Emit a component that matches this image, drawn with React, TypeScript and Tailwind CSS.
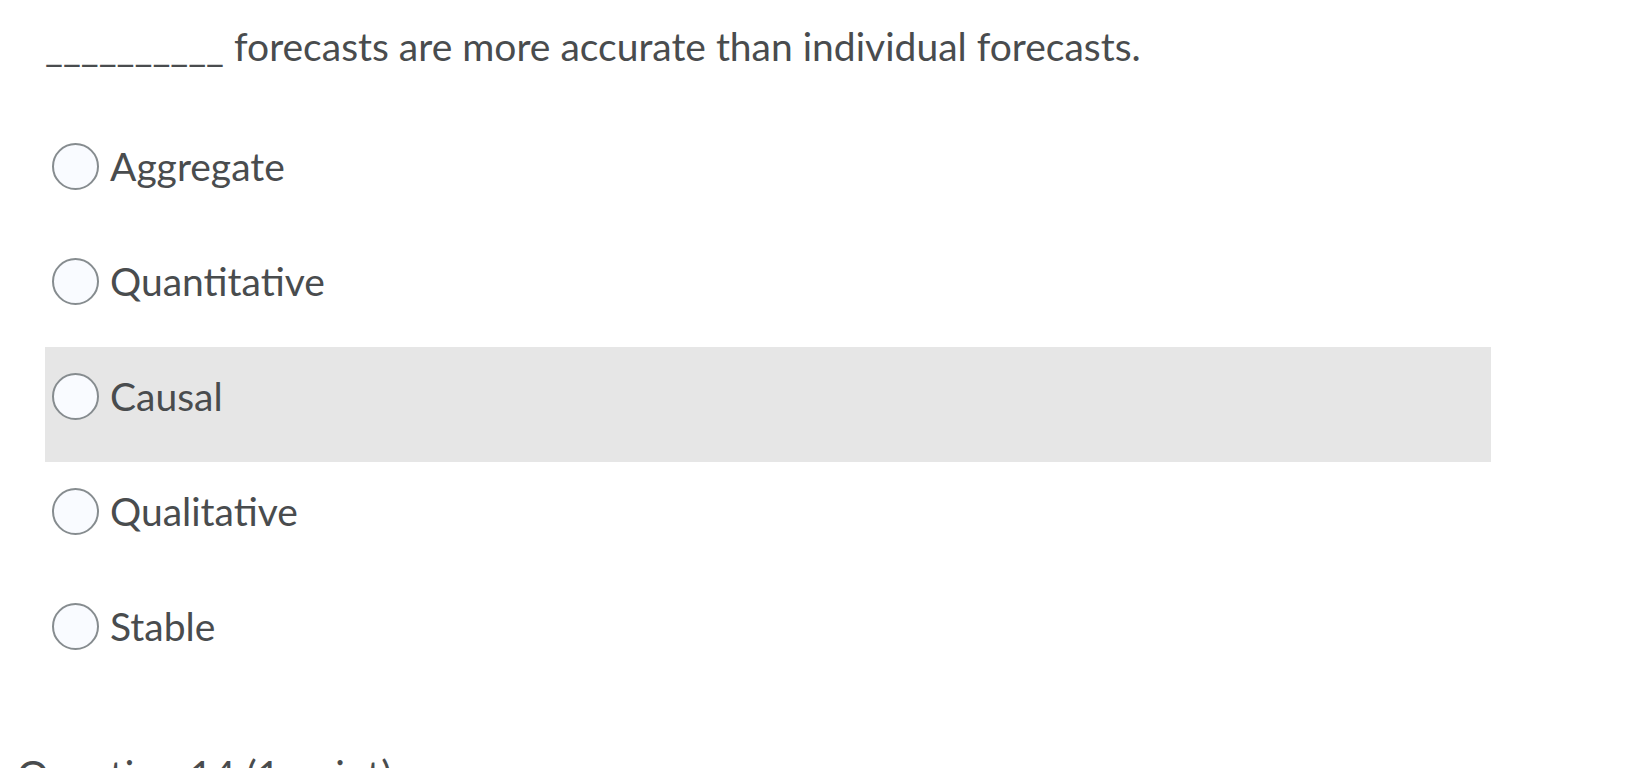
const options = ["Aggregate", "Quantitative", "Causal", "Qualitative", "Stable"];

const App = () => {
  const hovered = "Causal";

  return (
    <div
      className="min-h-[768px] bg-white pl-[45px] text-[#494c4e]"
      style={{ fontFamily: "Lato, 'Open Sans', sans-serif" }}
    >
      {/* question text */}
      <p className="pt-[22px] text-[39px] leading-[48px]">
        __________ forecasts are more accurate than individual forecasts.
      </p>

      {/* answer options */}
      <div className="mt-[47px] flex flex-col">
        {options.map((option) => (
          <label
            key={option}
            className={`flex h-[115px] w-[1446px] items-start pt-[26px] pl-[7px] ${
              option === hovered ? "bg-[#e6e6e6]" : ""
            }`}
          >
            <span className="flex h-[47px] items-center gap-[11px]">
              <span className="h-[47px] w-[47px] shrink-0 rounded-full border-2 border-[#868c8f] bg-[#f9fbff]" />
              <span className="text-[39px] leading-[47px]">{option}</span>
            </span>
          </label>
        ))}
      </div>

      {/* next question heading, cut off at the bottom */}
      <h2 className="-ml-[28px] mt-[59px] text-[40px] font-normal leading-[48px]">
        Question 14 (1 point)
      </h2>
    </div>
  );
};

export default App;
